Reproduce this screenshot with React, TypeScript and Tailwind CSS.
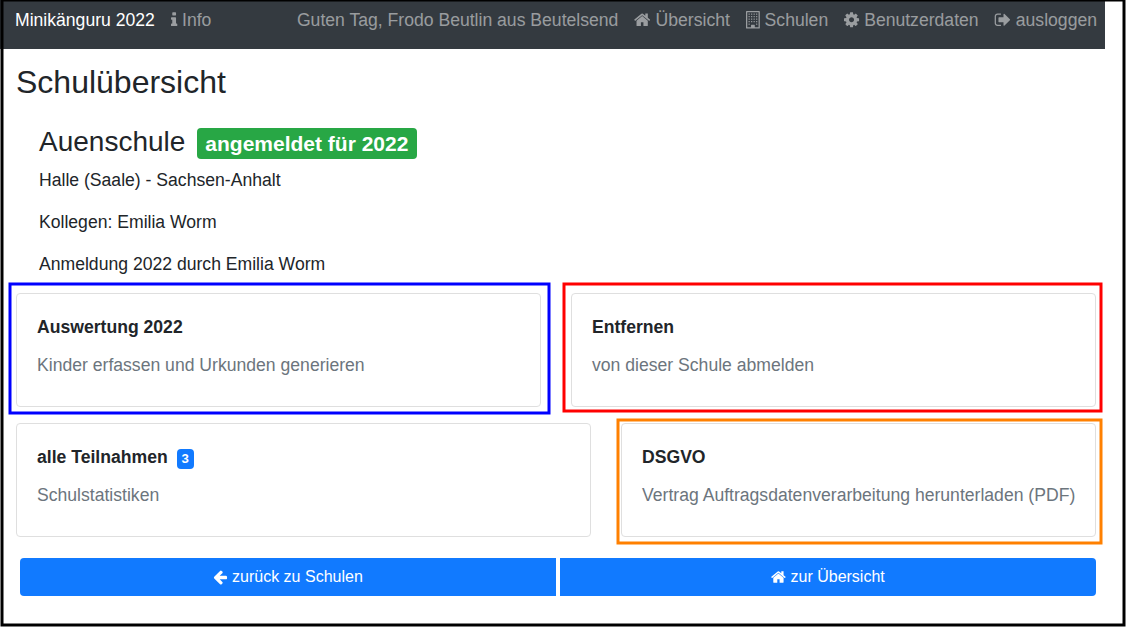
import type { ReactNode } from 'react';

const paths = {
  info: 'M1216 1344v128q0 26-19 45t-45 19h-512q-26 0-45-19t-19-45v-128q0-26 19-45t45-19h64v-384h-64q-26 0-45-19t-19-45v-128q0-26 19-45t45-19h384q26 0 45 19t19 45v576h64q26 0 45 19t19 45zm-128-1152v192q0 26-19 45t-45 19h-256q-26 0-45-19t-19-45v-192q0-26 19-45t45-19h256q26 0 45 19t19 45z',
  home: 'M1472 992v480q0 26-19 45t-45 19h-384v-384h-256v384h-384q-26 0-45-19t-19-45v-480q0-1 .5-3t.5-3l575-474 575 474q1 2 1 6zm223-69l-62 74q-8 9-21 11h-3q-13 0-21-7l-692-577-692 577q-12 8-24 7-13-2-21-11l-62-74q-8-10-7-23.5t11-21.5l719-599q32-26 76-26t76 26l244 204v-195q0-14 9-23t23-9h192q14 0 23 9t9 23v408l219 182q10 8 11 21.5t-7 23.5z',
  cog: 'M1152 896q0-106-75-181t-181-75-181 75-75 181 75 181 181 75 181-75 75-181zm512-109v222q0 12-8 23t-20 13l-185 28q-19 54-39 91 35 50 107 138 10 12 10 25t-9 23q-27 37-99 108t-94 71q-12 0-26-9l-138-108q-44 23-91 38-16 136-29 186-7 28-36 28h-222q-14 0-24.5-8.5t-11.5-21.5l-28-184q-49-16-90-37l-141 107q-10 9-25 9-14 0-25-11-126-114-165-168-7-10-7-23 0-12 8-23 15-21 51-66.5t54-70.5q-27-50-41-99l-183-27q-13-2-21-12.5t-8-23.5v-222q0-12 8-23t19-13l186-28q14-46 39-92-40-57-107-138-10-12-10-24 0-10 9-23 26-36 98.5-107.5t94.5-71.5q13 0 26 10l138 107q44-23 91-38 16-136 29-186 7-28 36-28h222q14 0 24.5 8.5t11.5 21.5l28 184q49 16 90 37l142-107q9-9 24-9 13 0 25 10 129 119 165 170 7 8 7 22 0 12-8 23-15 21-51 66.5t-54 70.5q26 50 41 98l183 28q13 2 21 12.5t8 23.5z',
  signOut: 'M704 1440q0 4 1 20t.5 26.5-3 23.5-10 19.5-20.5 6.5h-320q-119 0-203.5-84.5t-84.5-203.5v-704q0-119 84.5-203.5t203.5-84.5h320q13 0 22.5 9.5t9.5 22.5q0 4 1 20t.5 26.5-3 23.5-10 19.5-20.5 6.5h-320q-66 0-113 47t-47 113v704q0 66 47 113t113 47h312l11.5 1 11.5 3 8 5.5 7 9 2 13.5zm928-544q0 26-19 45l-544 544q-19 19-45 19t-45-19-19-45v-288h-448q-26 0-45-19t-19-45v-384q0-26 19-45t45-19h448v-288q0-26 19-45t45-19 45 19l544 544q19 19 19 45z',
  arrowLeft: 'M1664 896v128q0 53-32.5 90.5t-84.5 37.5h-704l293 294q38 36 38 90t-38 90l-75 76q-37 37-90 37-52 0-91-37l-651-652q-37-37-37-90 0-52 37-91l651-650q38-38 91-38 52 0 90 38l75 74q38 38 38 91t-38 91l-293 293h704q52 0 84.5 37.5t32.5 90.5z',
};

function Icon({ d, box = '0 0 1792 1792', className }: { d: string; box?: string; className: string }) {
  return (
    <svg viewBox={box} className={`shrink-0 overflow-visible ${className}`} fill="currentColor" aria-hidden="true">
      <path d={d} />
    </svg>
  );
}

function BuildingIcon({ className }: { className: string }) {
  const columns = [448, 704, 960, 1216];
  const rows = [256, 512, 768, 1024, 1280];
  return (
    <svg viewBox="192 0 1408 1792" className={`shrink-0 overflow-visible ${className}`} fill="currentColor" aria-hidden="true">
      <path fillRule="evenodd" d="M256 0h1280q64 0 64 64v1664q0 64-64 64h-1280q-64 0-64-64v-1664q0-64 64-64zM320 128v1536h384v-224q0-32 32-32h320q32 0 32 32v224h384v-1536z" />
      {rows.map((y) =>
        columns.map((x) =>
          y === 1280 && (x === 704 || x === 960) ? null : <rect key={`${x}-${y}`} x={x} y={y} width="128" height="128" rx="32" />,
        ),
      )}
    </svg>
  );
}

function NavItem({ icon, children }: { icon?: ReactNode; children: ReactNode }) {
  return (
    <a className="flex items-center gap-[4.89px] whitespace-nowrap text-white/50">
      {icon}
      <span>{children}</span>
    </a>
  );
}

function Card({ title, text, badge, className }: { title: string; text: string; badge?: string; className: string }) {
  return (
    <section className={`h-[114px] rounded border border-[#dfdfdf] bg-white px-5 pt-5 ${className}`}>
      <h3 className="flex h-[26px] items-center font-bold">
        {title}
        {badge && (
          <span className="mt-1 ml-[9px] flex h-5 w-[17px] items-center justify-center rounded bg-[#117aff] text-[13.2px] text-white">
            {badge}
          </span>
        )}
      </h3>
      <p className="mt-3 leading-[26px] whitespace-nowrap text-[#6c757d]">{text}</p>
    </section>
  );
}

export default function App() {
  return (
    <div className="relative h-[636px] w-[1134px] overflow-hidden bg-white font-['Liberation_Sans',sans-serif] text-[17.6px] leading-[26px] text-[#212529]">
      <nav className="flex h-[49px] w-[1105px] justify-between bg-[#343a40] pt-[7px] pr-2 pl-[15px]">
        <div className="flex h-[26px] gap-4">
          <a className="whitespace-nowrap text-white">Minikänguru 2022</a>
          <NavItem icon={<Icon d={paths.info} box="576 0 640 1792" className="mb-px h-[17.6px] w-[6.3px]" />}>Info</NavItem>
        </div>
        <div className="flex h-[26px] gap-4">
          <NavItem>Guten Tag, Frodo Beutlin aus Beutelsend</NavItem>
          <NavItem icon={<Icon d={paths.home} box="64 0 1664 1792" className="h-[17.6px] w-[16.34px]" />}>Übersicht</NavItem>
          <NavItem icon={<BuildingIcon className="h-[17.6px] w-[13.83px]" />}>Schulen</NavItem>
          <NavItem icon={<Icon d={paths.cog} box="128 0 1536 1792" className="h-[17.6px] w-[15.09px]" />}>Benutzerdaten</NavItem>
          <NavItem icon={<Icon d={paths.signOut} box="96 0 1664 1792" className="h-[17.6px] w-[16.34px]" />}>ausloggen</NavItem>
        </div>
      </nav>

      <main className="w-[1096px] pl-4">
        <h1 className="pt-[14px] text-[32px] leading-[38px]">Schulübersicht</h1>

        <div className="pt-[23px] pl-[23px]">
          <h2 className="flex h-[36px] items-center text-[28px] leading-[34px]">
            <span>Auenschule</span>
            <span className="mt-[2px] ml-3 flex h-[31px] w-[220px] items-center justify-center rounded bg-[#28a745] pr-px text-[21px] leading-[29px] font-bold whitespace-nowrap text-white">
              angemeldet für 2022
            </span>
          </h2>
          <div className="flex flex-col gap-4 pt-[7px]">
            <p>Halle (Saale) - Sachsen-Anhalt</p>
            <p>Kollegen: Emilia Worm</p>
            <p>Anmeldung 2022 durch Emilia Worm</p>
          </div>
        </div>

        <div className="mt-4 flex justify-between">
          <Card title="Auswertung 2022" text="Kinder erfassen und Urkunden generieren" className="w-[525px]" />
          <Card title="Entfernen" text="von dieser Schule abmelden" className="w-[525px]" />
        </div>
        <div className="mt-4 flex justify-between">
          <Card title="alle Teilnahmen" badge="3" text="Schulstatistiken" className="w-[575px]" />
          <Card title="DSGVO" text="Vertrag Auftragsdatenverarbeitung herunterladen (PDF)" className="w-[475px]" />
        </div>

        <div className="mt-[21px] flex gap-1 pl-1 text-base text-white">
          <button className="flex h-[38px] flex-1 items-center justify-center gap-[4.45px] rounded-l bg-[#117aff]">
            <Icon d={paths.arrowLeft} box="128 0 1536 1792" className="h-4 w-[14.4px]" />
            zurück zu Schulen
          </button>
          <button className="flex h-[38px] flex-1 items-center justify-center gap-[4.45px] rounded-r bg-[#117aff]">
            <Icon d={paths.home} box="64 0 1664 1792" className="h-4 w-[14.86px]" />
            zur Übersicht
          </button>
        </div>
      </main>

      <svg className="pointer-events-none absolute inset-0" width="1134" height="636" fill="none" strokeWidth="3" aria-hidden="true">
        <rect x="2" y="0" width="1122" height="625" stroke="#000" />
        <rect x="10" y="284" width="539" height="129" stroke="#00f" />
        <rect x="564" y="284" width="537" height="127" stroke="#f00" />
        <rect x="618" y="420" width="483" height="123" stroke="#ff8000" />
      </svg>
    </div>
  );
}
